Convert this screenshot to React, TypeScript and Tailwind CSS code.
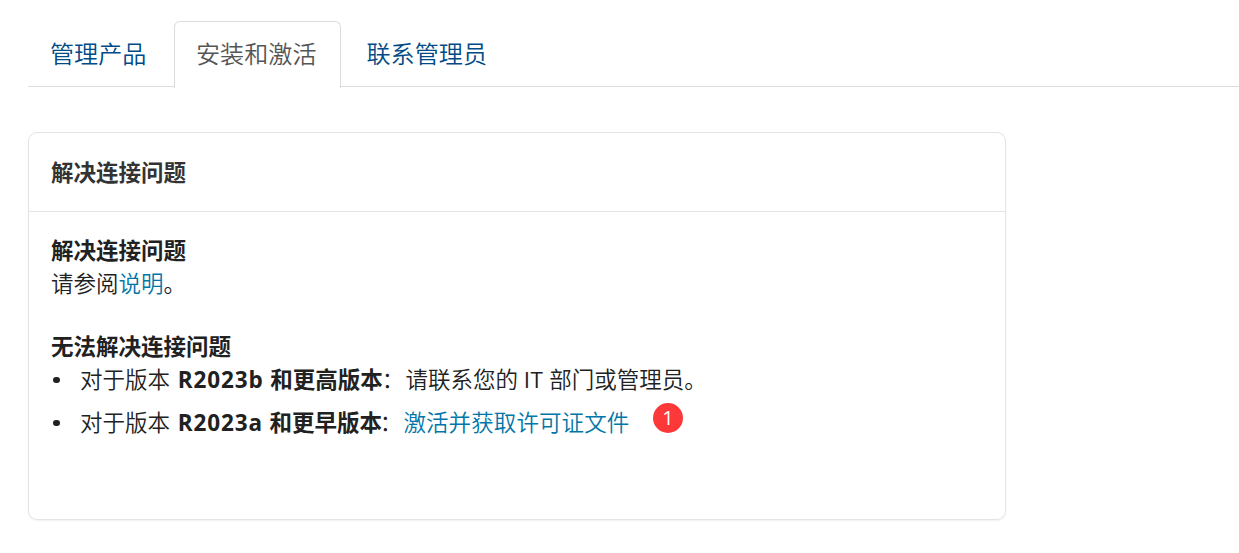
import type { ReactNode } from 'react';

const tabs = [
  { label: '管理产品', box: 'w-[146px] pl-[22px]' },
  { label: '安装和激活', box: 'w-[167px] pl-[21px]', active: true },
  { label: '联系管理员', box: 'w-[167px] pl-[25.5px]' },
];

function Tabs() {
  return (
    <nav className="flex h-[66px] border-b border-[#dcdcdc] text-[24.1px] leading-[64px]">
      {tabs.map((tab) => (
        <a
          key={tab.label}
          className={`h-[67px] shrink-0 whitespace-nowrap ${tab.box} ${
            tab.active
              ? 'rounded-t-[6px] border border-b-0 border-[#dcdcdc] bg-white text-[#555555]'
              : 'pt-px text-[#004b87]'
          }`}
        >
          {tab.label}
        </a>
      ))}
    </nav>
  );
}

function Bullet({ children }: { children: ReactNode }) {
  return (
    <li className="flex h-[43px] items-start whitespace-nowrap">
      <span className="mt-[13px] ml-[2px] mr-[20.5px] size-[6.5px] shrink-0 rounded-full bg-[#212121]" />
      {children}
    </li>
  );
}

function Version({ release, children, width }: { release: string; children: string; width: string }) {
  return (
    <b className={`ml-[2px] inline-block font-bold ${width}`}>
      <span className="tracking-[0.85px]">{release} </span>
      {children}
    </b>
  );
}

export default function App() {
  return (
    <main className="h-[553px] overflow-hidden bg-white pl-[28px] pt-[21px] font-['Open_Sans','Noto_Sans_CJK_SC',sans-serif] font-[350] text-[#212121]">
      <Tabs />
      <section className="mt-[45px] h-[388px] w-[978px] rounded-[9px] border border-[#e4e4e4] text-[22.5px] leading-[32.2px] shadow-[0_1px_2px_rgba(0,0,0,0.06)]">
        <h2 className="h-[79px] border-b border-[#e4e4e4] pl-[22px] pt-[24px] font-bold text-[#333333]">
          解决连接问题
        </h2>
        <div className="pl-[22px] pt-[23px]">
          <h3 className="font-bold">解决连接问题</h3>
          <p className="relative top-px">
            请参阅<a className="text-[#0076a8]">说明</a>。
          </p>
          <h3 className="mt-[32px] font-bold">无法解决连接问题</h3>
          <ul>
            <Bullet>
              <span>
                对于版本 <Version width="w-[205px]" release="R2023b">和更高版本</Version>
                <span className="-ml-px mr-px">：</span>请联系您的 <span className="font-normal tracking-[0.5px]">IT</span> 部门或管理员。
              </span>
            </Bullet>
            <Bullet>
              <span>
                对于版本 <Version width="w-[203px]" release="R2023a">和更早版本</Version>
                <span className="-ml-px mr-px">：</span>
                <a className="tracking-[0.1px] text-[#0076a8]">激活并获取许可证文件</a>
              </span>
              <span className="-mt-[4px] ml-[23.5px] flex size-[30px] items-center justify-center rounded-full bg-[#fc3838] text-[20px] font-normal leading-none text-white">
                1
              </span>
            </Bullet>
          </ul>
        </div>
      </section>
    </main>
  );
}
